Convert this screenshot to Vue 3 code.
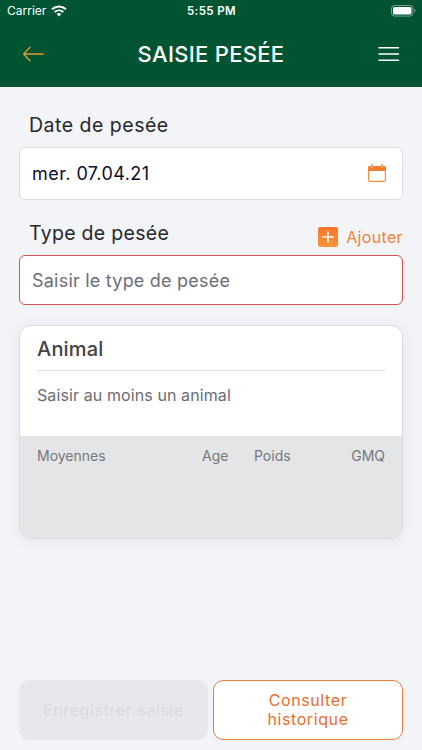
<script setup>
const columns = ['Moyennes', 'Age', 'Poids', 'GMQ']
</script>

<template>
  <div class="screen">
    <header class="header">
      <div class="status">
        <div class="carrier">
          <span>Carrier</span>
          <svg class="wifi" width="16" height="12" viewBox="0 0 16 12" fill="none">
            <path d="M1 4.3C5 .6 11 .6 15 4.3" stroke="#fff" stroke-width="2" />
            <path d="M3.6 7C6.1 4.8 9.9 4.8 12.4 7" stroke="#fff" stroke-width="1.9" />
            <path d="M5.6 9C7 7.8 9 7.8 10.4 9L8 11.4Z" fill="#fff" />
          </svg>
        </div>
        <span class="time">5:55 PM</span>
        <svg class="battery" width="25" height="12" viewBox="0 0 25 12">
          <rect x=".5" y=".5" width="21.5" height="10.6" rx="3" fill="none" stroke="#fff" stroke-opacity=".45" />
          <rect x="2" y="2" width="18.5" height="7.6" rx="1.6" fill="#fff" />
          <path d="M23.3 4V7.6C24.8 7 24.8 4.6 23.3 4Z" fill="#fff" fill-opacity=".5" />
        </svg>
      </div>
      <div class="bar">
        <svg class="back" width="22" height="16" viewBox="0 0 22 16" fill="none" stroke="#e3992f" stroke-width="1.3" stroke-linecap="round" stroke-linejoin="round">
          <path d="M8 1.2L1.6 8L8 14.8M1.6 8H21.2" />
        </svg>
        <h1>SAISIE PESÉE</h1>
        <svg class="menu" width="22" height="16" viewBox="0 0 22 16" stroke="#fff" stroke-width="1.5" stroke-linecap="round">
          <path d="M1 1.8H20.5M1 8H20.5M1 14.2H20.5" />
        </svg>
      </div>
    </header>

    <main class="content">
      <label class="label"><span class="t-date">Date de pesée</span></label>
      <div class="field date">
        <span>mer. 07.04.21</span>
        <svg width="20" height="19" viewBox="0 0 20 19">
          <rect x="1.6" y="2.7" width="16.8" height="14.7" rx="1.2" fill="none" stroke="#f6923f" stroke-width="1.2" />
          <path d="M1.2 7V3.3Q1.2 2.2 2.3 2.2H17.7Q18.8 2.2 18.8 3.3V7Z" fill="#f47b2f" />
          <path d="M5 1.3V3.2M15 1.3V3.2" stroke="#f6923f" stroke-width="2" stroke-linecap="round" />
          <path d="M5 2.5V3.4M15 2.5V3.4" stroke="#ffd9b8" stroke-width="1" stroke-linecap="round" />
        </svg>
      </div>

      <div class="label-row">
        <label class="label"><span class="t-type">Type de pesée</span></label>
        <div class="add">
          <svg width="20" height="20" viewBox="0 0 20 20">
            <defs>
              <linearGradient id="plus-fill" x1="0" y1="0" x2="0" y2="1">
                <stop offset="0" stop-color="#f97528" />
                <stop offset="1" stop-color="#fa963c" />
              </linearGradient>
            </defs>
            <rect width="20" height="20" rx="2" fill="url(#plus-fill)" />
            <path d="M10 5.2V14.8M5.2 10H14.8" stroke="#fff" stroke-width="1.7" stroke-linecap="round" />
          </svg>
          <span>Ajouter</span>
        </div>
      </div>
      <div class="field type"><span>Saisir le type de pesée</span></div>

      <section class="card">
        <div class="card-top">
          <h2>Animal</h2>
          <p>Saisir au moins un animal</p>
        </div>
        <div class="card-bottom">
          <span v-for="c in columns" :key="c">{{ c }}</span>
        </div>
      </section>
    </main>

    <footer class="footer">
      <button class="btn save" disabled><span>Enregistrer saisie</span></button>
      <button class="btn history"><span>Consulter<br />historique</span></button>
    </footer>
  </div>
</template>

<style>
body {
  margin: 0;
  background: #f3f4f8;
}
</style>

<style scoped>
.screen {
  box-sizing: border-box;
  display: flex;
  flex-direction: column;
  height: 750px;
  overflow: hidden;
  background: #f3f4f8;
  font-family: Inter, "Liberation Sans", sans-serif;
}
svg {
  display: block;
  flex: none;
}
span {
  white-space: nowrap;
}
.header {
  height: 87px;
  background: #005432;
  color: #fff;
}
.status {
  display: grid;
  grid-template-columns: 1fr auto 1fr;
  align-items: center;
  height: 22px;
  padding: 0 6px 0 7px;
  font-size: 12px;
}
.carrier {
  display: flex;
  gap: 5px;
  line-height: 14px;
  padding-bottom: 1px;
}
.wifi {
  margin-top: 1px;
}
.time {
  font-weight: 600;
  font-size: 11.5px;
  letter-spacing: 0.4px;
}
.battery {
  justify-self: end;
}
.bar {
  display: grid;
  grid-template-columns: 1fr auto 1fr;
  align-items: center;
  height: 64px;
  padding: 0 22px;
}
h1 {
  margin: 0;
  font-size: 22px;
  line-height: 28px;
  font-weight: 500;
  letter-spacing: 0.3px;
}
.menu {
  justify-self: end;
}
.content {
  flex: 1;
  padding: 24px 19px 0;
}
.label {
  display: block;
  padding-left: 10px;
  font-size: 19.5px;
  line-height: 28px;
  color: #26272b;
}
.t-date {
  letter-spacing: 0.5px;
}
.t-type {
  letter-spacing: 0.3px;
}
.field {
  box-sizing: border-box;
  display: flex;
  align-items: center;
  justify-content: space-between;
  padding: 0 15px 0 12px;
  border: 1px solid #dcdde0;
  border-radius: 6px;
  background: #fff;
  font-size: 18px;
}
.date {
  height: 53px;
  margin-top: 8px;
  color: #0c0c28;
  letter-spacing: 0.45px;
}
.label-row {
  display: flex;
  justify-content: space-between;
  height: 36px;
  margin-top: 19px;
}
.add {
  display: flex;
  align-items: center;
  gap: 8px;
  height: 20px;
  margin-top: 8px;
  color: #f08339;
  font-size: 16px;
  letter-spacing: 0.35px;
}
.type {
  height: 50px;
  border-color: #d9534f;
  color: #6b6f77;
  letter-spacing: 0.22px;
}
.card {
  box-sizing: border-box;
  height: 214px;
  margin-top: 20px;
  display: flex;
  flex-direction: column;
  overflow: hidden;
  border: 1px solid #dadbdf;
  border-radius: 12px;
  background: #fff;
  box-shadow: 0 2px 14px rgba(40, 50, 80, 0.07);
}
.card-top {
  box-sizing: border-box;
  height: 110px;
  padding: 0 17px;
}
h2 {
  height: 44px;
  margin: 0;
  border-bottom: 1px solid #dedee2;
  font-size: 20px;
  line-height: 46px;
  font-weight: 500;
  letter-spacing: 0.2px;
  color: #434345;
}
p {
  margin: 14px 0 0;
  font-size: 16px;
  line-height: 20px;
  letter-spacing: 0.1px;
  color: #6a6c72;
}
.card-bottom {
  display: grid;
  grid-template-columns: 165px 52px 1fr auto;
  flex: 1;
  padding: 10px 17px 0;
  background: #e4e5e7;
  font-size: 14px;
  line-height: 20px;
  color: #74777d;
}
.footer {
  display: grid;
  grid-template-columns: 189px 190px;
  gap: 5px;
  padding: 0 19px 10px;
}
.btn {
  box-sizing: border-box;
  height: 60px;
  padding: 0;
  border: 1px solid #e8e8ec;
  border-radius: 10px;
  background: #e8e8ec;
  font-family: inherit;
  font-size: 16px;
  line-height: 19px;
  letter-spacing: 0.6px;
}
.save {
  color: #d9dbe1;
}
.history {
  border-color: #ee7c41;
  background: #fff;
  color: #e8702f;
}
</style>
